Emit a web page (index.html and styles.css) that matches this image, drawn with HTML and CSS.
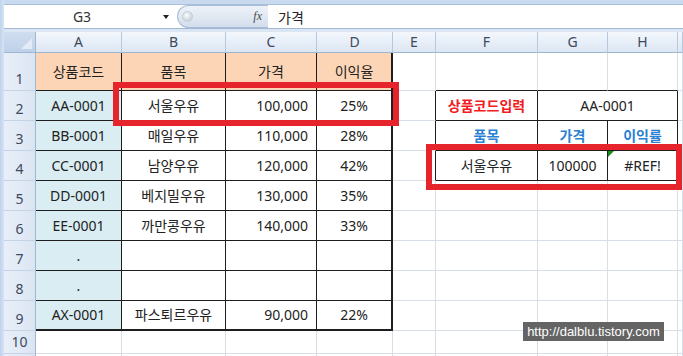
FILE: index.html
```html
<!DOCTYPE html>
<html>

	<head>
		<meta charset="UTF-8">
		<title>상품코드 조회</title>
		<link rel="stylesheet" href="styles.css">
	</head>

	<body>
		<div class="window">
			<div class="frame"></div>
			<div class="main">
				<div class="topbar"></div>
				<div class="formulaBar">
					<div class="nameBox">G3</div>
					<div class="nameDrop"></div>
					<div class="fxPill">
						<span class="knob"></span>
						<span class="fx">fx</span>
					</div>
					<div class="formula">가격</div>
				</div>
				<div class="gap"></div>

				<div class="sheet">
					<!-- column headers -->
					<div class="corner"><span class="cornerTri"></span></div>
					<div class="hd">A</div>
					<div class="hd">B</div>
					<div class="hd">C</div>
					<div class="hd">D</div>
					<div class="hd">E</div>
					<div class="hd">F</div>
					<div class="hd">G</div>
					<div class="hd">H</div>
					<div class="hd"></div>

					<!-- 1 -->
					<div class="rh">1</div>
					<div class="c tb peach">상품코드</div>
					<div class="c tb peach">품목</div>
					<div class="c tb peach">가격</div>
					<div class="c tb peach thickR">이익율</div>
					<div class="c"></div>
					<div class="c edgeB"></div>
					<div class="c edgeB"></div>
					<div class="c edgeB"></div>
					<div class="c"></div>

					<!-- 2 -->
					<div class="rh">2</div>
					<div class="c tb aqua">AA-0001</div>
					<div class="c tb">서울우유</div>
					<div class="c tb num">100,000</div>
					<div class="c tb thickR">25%</div>
					<div class="c edgeR"></div>
					<div class="c tb red">상품코드입력</div>
					<div class="c tb span2">AA-0001</div>
					<div class="c"></div>

					<!-- 3 -->
					<div class="rh">3</div>
					<div class="c tb aqua">BB-0001</div>
					<div class="c tb">매일우유</div>
					<div class="c tb num">110,000</div>
					<div class="c tb thickR">28%</div>
					<div class="c edgeR"></div>
					<div class="c tb blue">품목</div>
					<div class="c tb blue">가격</div>
					<div class="c tb blue">이익률</div>
					<div class="c"></div>

					<!-- 4 -->
					<div class="rh">4</div>
					<div class="c tb aqua">CC-0001</div>
					<div class="c tb">남양우유</div>
					<div class="c tb num">120,000</div>
					<div class="c tb thickR">42%</div>
					<div class="c edgeR"></div>
					<div class="c tb">서울우유</div>
					<div class="c tb">100000</div>
					<div class="c tb err">#REF!</div>
					<div class="c"></div>

					<!-- 5 -->
					<div class="rh">5</div>
					<div class="c tb aqua">DD-0001</div>
					<div class="c tb">베지밀우유</div>
					<div class="c tb num">130,000</div>
					<div class="c tb thickR">35%</div>
					<div class="c"></div>
					<div class="c"></div>
					<div class="c"></div>
					<div class="c"></div>
					<div class="c"></div>

					<!-- 6 -->
					<div class="rh">6</div>
					<div class="c tb aqua">EE-0001</div>
					<div class="c tb">까만콩우유</div>
					<div class="c tb num">140,000</div>
					<div class="c tb thickR">33%</div>
					<div class="c"></div>
					<div class="c"></div>
					<div class="c"></div>
					<div class="c"></div>
					<div class="c"></div>

					<!-- 7 -->
					<div class="rh">7</div>
					<div class="c tb aqua">.</div>
					<div class="c tb"></div>
					<div class="c tb"></div>
					<div class="c tb thickR"></div>
					<div class="c"></div>
					<div class="c"></div>
					<div class="c"></div>
					<div class="c"></div>
					<div class="c"></div>

					<!-- 8 -->
					<div class="rh">8</div>
					<div class="c tb aqua">.</div>
					<div class="c tb"></div>
					<div class="c tb"></div>
					<div class="c tb thickR"></div>
					<div class="c"></div>
					<div class="c"></div>
					<div class="c"></div>
					<div class="c"></div>
					<div class="c"></div>

					<!-- 9 -->
					<div class="rh">9</div>
					<div class="c tb aqua thickB">AX-0001</div>
					<div class="c tb thickB">파스퇴르우유</div>
					<div class="c tb num thickB">90,000</div>
					<div class="c tb thickR thickB">22%</div>
					<div class="c"></div>
					<div class="c"></div>
					<div class="c"></div>
					<div class="c"></div>
					<div class="c"></div>

					<!-- 10 -->
					<div class="rh">10</div>
					<div class="c"></div>
					<div class="c"></div>
					<div class="c"></div>
					<div class="c"></div>
					<div class="c"></div>
					<div class="c"></div>
					<div class="c"></div>
					<div class="c"></div>
					<div class="c"></div>

					<!-- 11 -->
					<div class="rh"></div>
					<div class="c"></div>
					<div class="c"></div>
					<div class="c"></div>
					<div class="c"></div>
					<div class="c"></div>
					<div class="c"></div>
					<div class="c"></div>
					<div class="c"></div>
					<div class="c"></div>
				</div>
			</div>

			<!-- annotations -->
			<div class="mark markRow"></div>
			<div class="mark markResult"></div>
			<div class="watermark">http://dalblu.tistory.com</div>
		</div>
	</body>

</html>
```

FILE: styles.css
```css
body {
	margin: 0;
	padding: 0;
	font-family: "Noto Sans", "Noto Sans CJK KR", sans-serif;
	color: #222;
}

.window {
	position: relative;
	width: 683px;
	height: 356px;
	overflow: hidden;
	display: flex;
	background: #fff;
}

.frame {
	flex: none;
	width: 4px;
	background: linear-gradient(to right, #bfd3ec, #d6e4f5);
}

.main {
	flex: 1;
	min-width: 0;
	display: flex;
	flex-direction: column;
}

/* formula bar */

.topbar {
	flex: none;
	height: 4px;
	background: #c9daef;
	border-bottom: 1px solid #a9c0dc;
}

.formulaBar {
	flex: none;
	height: 23px;
	display: flex;
	align-items: center;
	background: #fff;
	border-bottom: 1px solid #a3b8d2;
	font-size: 14px;
}

.nameBox {
	width: 156px;
	text-align: center;
	color: #333;
}

.nameDrop {
	width: 0;
	height: 0;
	margin-left: 3px;
	border-left: 3px solid transparent;
	border-right: 3px solid transparent;
	border-top: 4px solid #222;
}

.fxPill {
	box-sizing: border-box;
	width: 91px;
	height: 23px;
	margin-left: 8px;
	align-self: flex-start;
	border: 1px solid #a8bcd6;
	border-right: none;
	border-radius: 12px 0 0 12px;
	background: linear-gradient(#eef3f9, #d3deec);
	display: flex;
	align-items: center;
	justify-content: space-between;
	padding: 0 6px 0 4px;
}

.knob {
	width: 9px;
	height: 9px;
	border-radius: 50%;
	background: radial-gradient(circle at 40% 35%, #fafcfe, #b9c3cf);
	border: 1px solid #c3ccd7;
}

.fx {
	font-family: "Liberation Serif", serif;
	font-style: italic;
	font-size: 12px;
	color: #4a4a4a;
}

.formula {
	margin-left: 10px;
	color: #222;
}

.gap {
	flex: none;
	height: 3px;
	background: #dbe6f4;
}

/* sheet grid */

.sheet {
	flex: 1;
	min-height: 0;
	overflow: hidden;
	display: grid;
	grid-template-columns: 32px 86px 104px 91px 76px 43px 102px 70px 70px 1fr;
	grid-template-rows: 21px 38px repeat(8, 30px) 23px 30px;
	font-size: 14px;
}

.sheet > div {
	box-sizing: border-box;
	display: flex;
	align-items: center;
	justify-content: center;
	white-space: nowrap;
	line-height: 1;
}

.corner {
	position: relative;
	background: linear-gradient(#d0ddef, #bfd1ea);
	border-right: 1px solid #9eb6ce;
	border-bottom: 1px solid #9eb6ce;
}

.cornerTri {
	position: absolute;
	right: 3px;
	bottom: 3px;
	width: 0;
	height: 0;
	border-left: 11px solid transparent;
	border-bottom: 11px solid #e3ebf6;
}

.hd {
	background: linear-gradient(#f3f7fc, #dce6f3);
	border-right: 1px solid #b9c9dd;
	border-bottom: 1px solid #9eb6ce;
	color: #3b4a5d;
}

.rh {
	align-items: flex-end !important;
	padding-bottom: 4px;
	background: linear-gradient(to right, #e8eff8, #dbe5f2);
	border-right: 1px solid #9eb6ce;
	border-bottom: 1px solid #c4d3e6;
	color: #3b4a5d;
}

.c {
	border-right: 1px solid #d8dee8;
	border-bottom: 1px solid #d8dee8;
}

.tb {
	border-right-color: #1e1e1e;
	border-bottom-color: #1e1e1e;
}

.thickR {
	border-right: 2px solid #1e1e1e;
}

.thickB {
	border-bottom: 2px solid #1e1e1e;
}

.edgeR {
	border-right-color: #1e1e1e;
}

.edgeB {
	border-bottom-color: #1e1e1e;
}

.peach {
	background: #fbd5b5;
}

.aqua {
	background: #daedf3;
}

.num {
	justify-content: flex-end !important;
	padding-right: 8px;
}

.span2 {
	grid-column: span 2;
}

.red {
	color: #f21c24;
	font-weight: bold;
}

.blue {
	color: #2a80d2;
	font-weight: bold;
}

.err {
	position: relative;
}

.err::before {
	content: "";
	position: absolute;
	left: 0;
	top: 0;
	border-top: 6px solid #1a8a1a;
	border-right: 6px solid transparent;
}

/* annotations over the sheet */

.mark {
	position: absolute;
	border: 6px solid #e5242c;
	box-sizing: border-box;
}

.markRow {
	left: 113px;
	top: 82px;
	width: 286px;
	height: 44px;
}

.markResult {
	left: 426px;
	top: 144px;
	width: 256px;
	height: 46px;
}

.watermark {
	position: absolute;
	left: 523px;
	top: 322px;
	width: 141px;
	height: 19px;
	background: #646464;
	color: #fff;
	font-family: "Liberation Sans", sans-serif;
	font-size: 13px;
	line-height: 19px;
	text-align: center;
}
```
